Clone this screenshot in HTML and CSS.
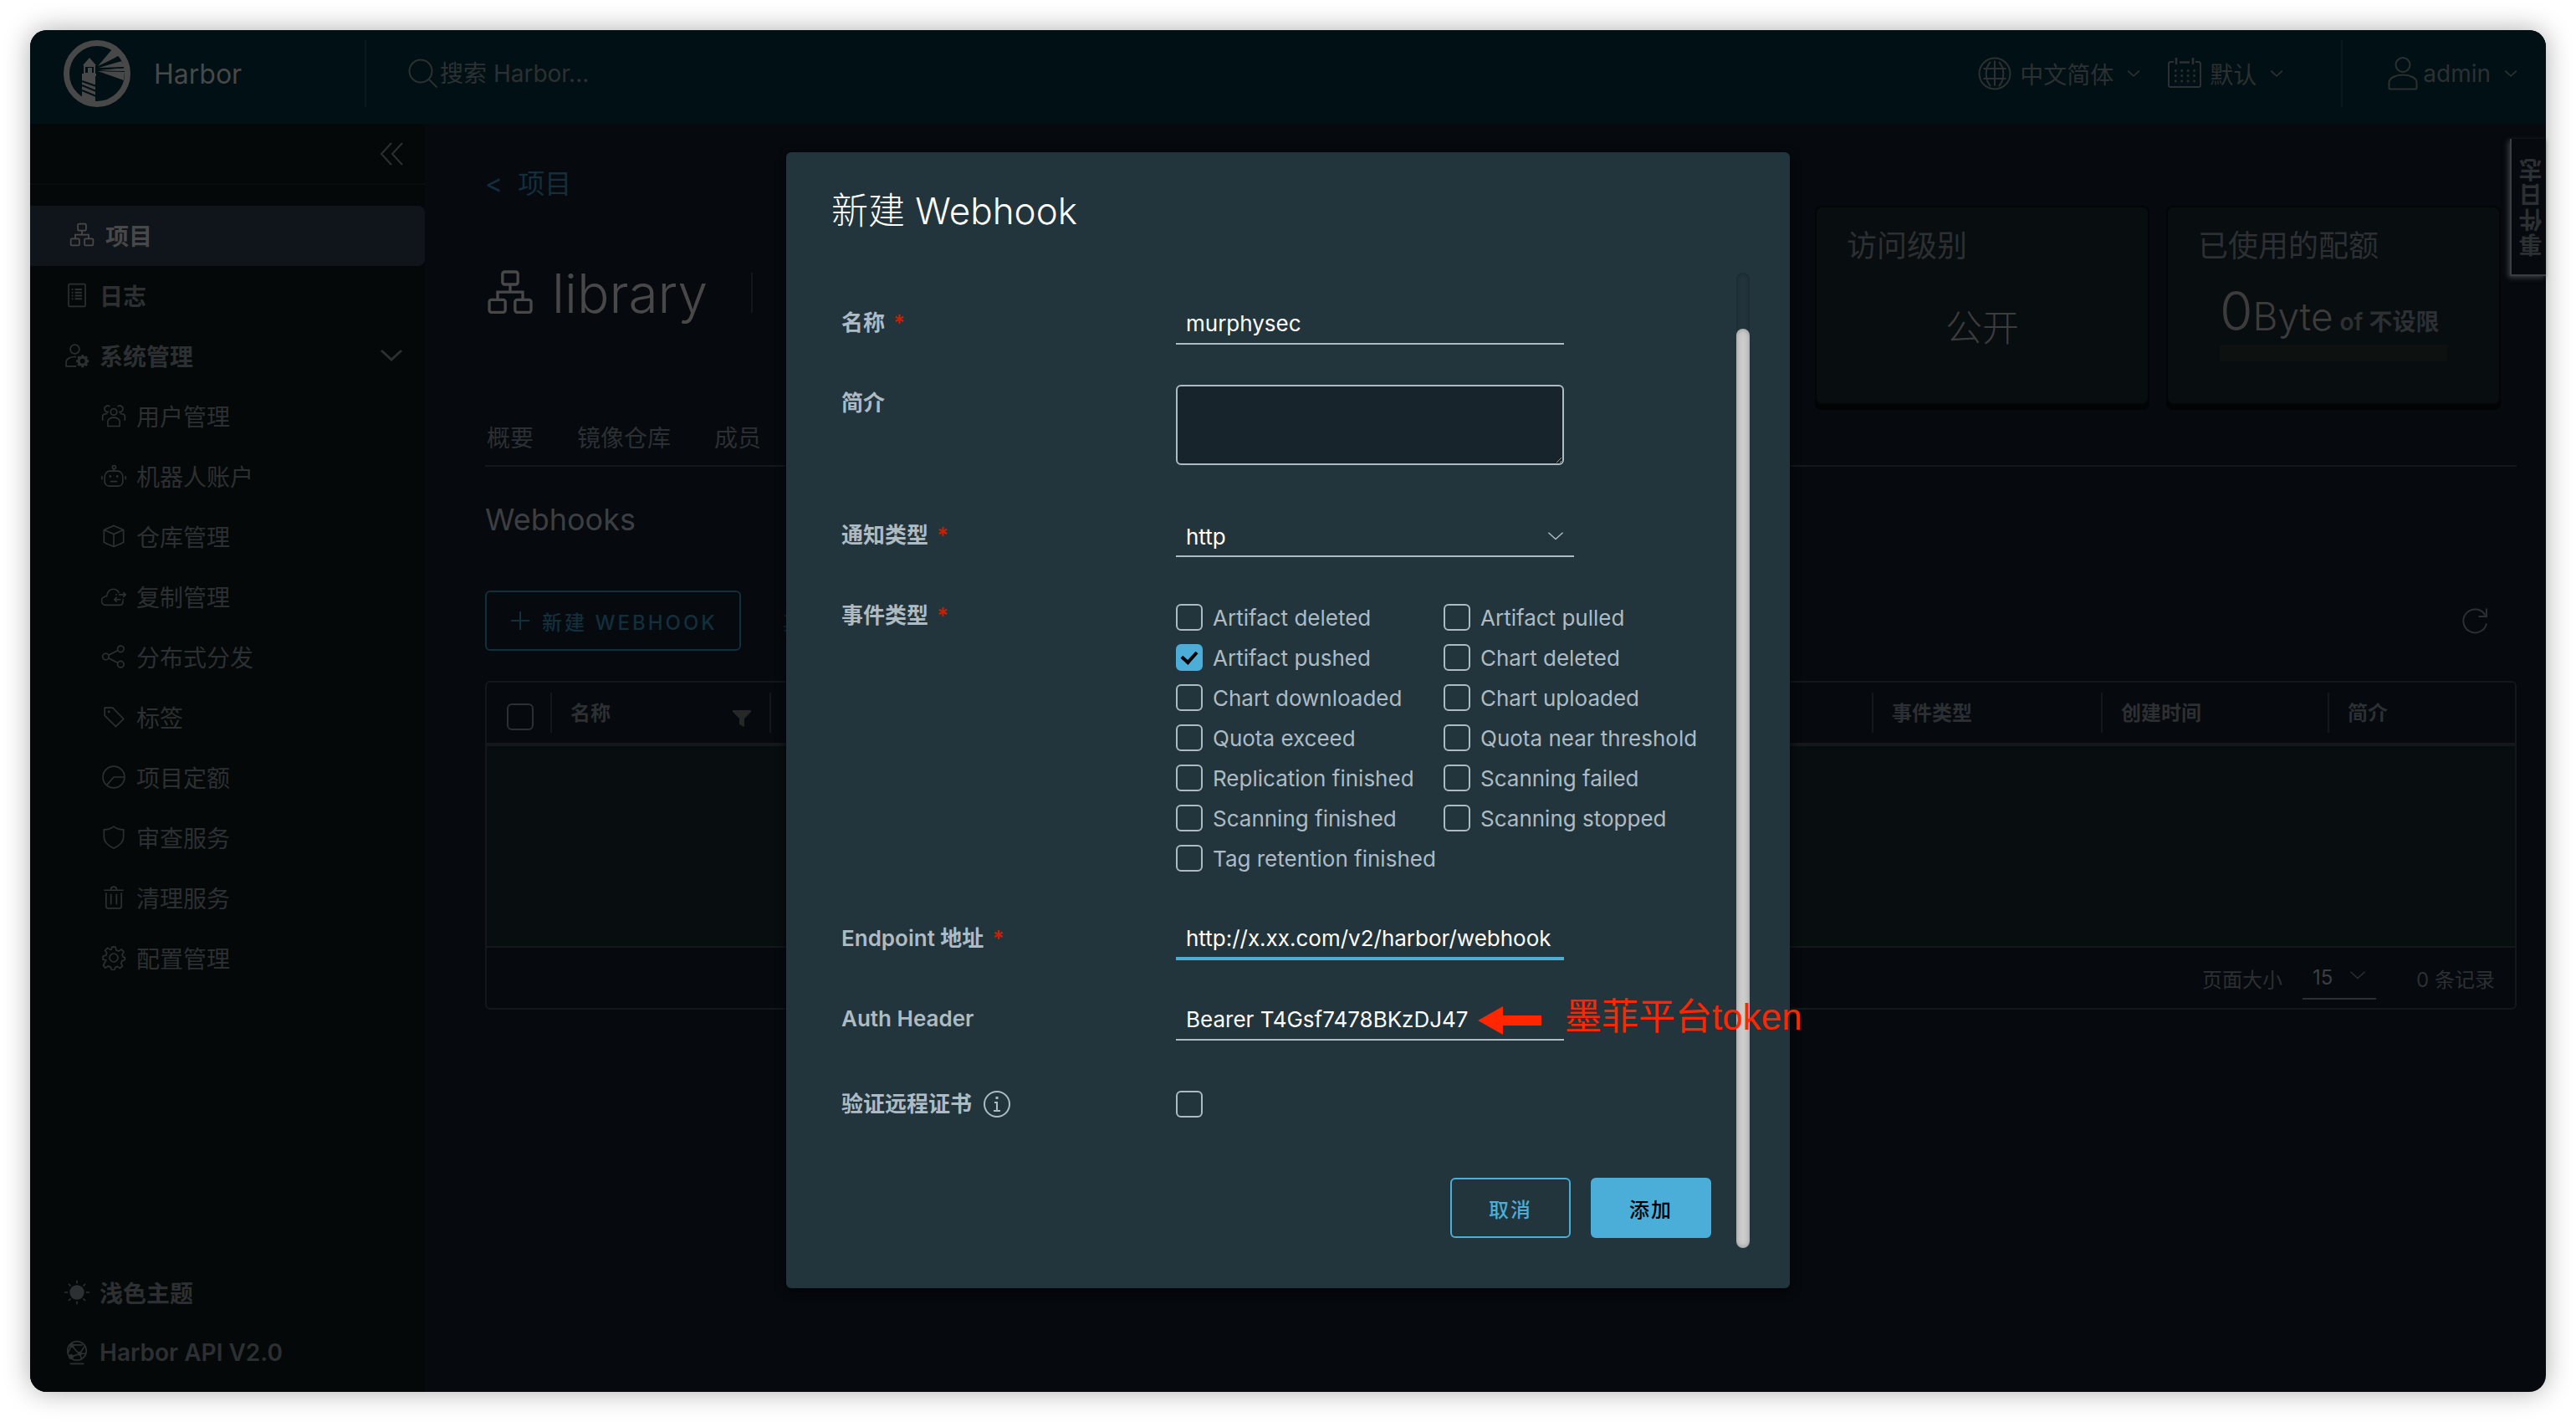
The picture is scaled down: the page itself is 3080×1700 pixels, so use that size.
FILE: index.html
```html
<!DOCTYPE html>
<html lang="zh-CN">
<head>
<meta charset="utf-8">
<title>Harbor</title>
<link rel="stylesheet" href="styles.css">
</head>
<body>
<svg class="sprite" aria-hidden="true">
  <symbol id="i-org" viewBox="0 0 36 36"><rect x="12.500" y="3" width="11" height="9" rx="1.500"/><rect x="3" y="23" width="11.500" height="9" rx="1.500"/><rect x="21.500" y="23" width="11.500" height="9" rx="1.500"/><path d="M18 12v5M9 23v-5.500h18V23"/></symbol>
  <symbol id="i-log" viewBox="0 0 36 36"><rect x="6" y="2" width="24" height="32" rx="1.500"/><path d="M10.500 9.500h2M15 9.500h10M10.500 14h2M15 14h10M10.500 18.500h2M15 18.500h10M10.500 23h2M15 23h10" stroke-width="2.400"/></symbol>
  <symbol id="i-admin" viewBox="0 0 36 36"><circle cx="15" cy="9" r="6.500"/><path d="M17 20C9 19 3 23 2.500 27v6.500H17"/><circle cx="26" cy="26" r="5.500" stroke-width="4"/><path d="M26 17v3M26 32v3M17 26h3M32 26h3M19.600 19.600l2 2M30.400 30.400l2 2M19.600 32.400l2-2M30.400 21.600l2-2" stroke-width="3.600"/></symbol>
  <symbol id="i-users" viewBox="0 0 36 36"><circle cx="18" cy="12.500" r="4.500"/><path d="M9.500 33v-7c0-3 4-5.500 8.500-5.500s8.500 2.500 8.500 5.500v7zM10.500 12.500A4.500 4.500 0 1 1 12.500 5M25.500 12.500A4.500 4.500 0 1 0 23.500 5M2 25v-6c0-2.500 3-4 7-4M34 25v-6c0-2.500-3-4-7-4"/></symbol>
  <symbol id="i-robot" viewBox="0 0 36 36"><path d="M12 11h12c3.500 0 7 4 7 8.500v7c0 3-3 6-6 6H11c-3 0-6-3-6-6v-7C5 15 8.500 11 12 11zM18 11V8M13 26h10M1 18v5M35 18v5"/><circle cx="18.500" cy="5.500" r="2.500"/><path d="M11.500 18.500h3M21.500 18.500h3" stroke-width="3"/></symbol>
  <symbol id="i-box" viewBox="0 0 36 36"><path d="M18 3l14 6v18l-14 6-14-6V9zM4 9l14 6 14-6M18 15v18"/></symbol>
  <symbol id="i-cloud" viewBox="0 0 36 36"><path d="M31 24v2c0 2.500-2 4.500-5 4.500H7c-4 0-6.500-3-6.500-6.500S4 18 8 17.500C8.500 12 12 7.500 17 7.500c4 0 7 2 8.500 5.500M25 15.500h9.500M31.500 12l3.500 3.500-3.500 3.500M19 22.500h9M22.500 19L19 22.500l3.500 3.500M20.500 15.500h2M30.500 22.500h2"/></symbol>
  <symbol id="i-share" viewBox="0 0 36 36"><circle cx="6.500" cy="18" r="4.500"/><circle cx="28" cy="7" r="4.500"/><circle cx="28" cy="29" r="4.500"/><path d="M10.500 16L24 9M10.500 20L24 27"/></symbol>
  <symbol id="i-tag" viewBox="0 0 36 36"><path d="M5 5h11.500L32 21 21 32 5 16z"/><path d="M9.500 10.500h3" stroke-width="3"/></symbol>
  <symbol id="i-pie" viewBox="0 0 36 36"><circle cx="18" cy="18" r="15.500"/><path d="M33 18H18L8.500 29"/></symbol>
  <symbol id="i-shield" viewBox="0 0 36 36"><path d="M18 2.500c4 3 9 4.500 14 4.500v10c0 8-6 13-14 16.500C10 30 4 25 4 17V7c5 0 10-1.500 14-4.500z"/></symbol>
  <symbol id="i-trash" viewBox="0 0 36 36"><path d="M4 7.500h28M7 11v20c0 1.500 1 2.500 2.500 2.500h17c1.500 0 2.500-1 2.500-2.500V11M14 13v15M22 13v15M14 6.500c0-3 1-4 4-4s4 1 4 4"/></symbol>
  <symbol id="i-gear" viewBox="0 0 36 36"><path d="M15.500 2.500h5l1 4.500 3.500 1.500 4-2.500 3.500 3.500-2.500 4 1.500 3.500 2.500.500v3.500l-4 1.500-1.500 3.500 2 4-3.500 3-4-2.500-3 1.500-1 3.500h-4l-1.500-4-3.500-1.500-4 2.500-3-3.500 2-4L7 21.500 2.500 20.500v-4.500L7 14.500 8 11 5.500 7.500 9 4l4 2.500 1.500-.500z"/><circle cx="18" cy="18" r="6"/></symbol>
  <symbol id="i-sun" viewBox="0 0 36 36"><circle cx="18" cy="18" r="10.500" fill="currentColor" stroke="none"/><path d="M18 1v4M18 31v4M0 18h5M31 18h5M6 6l3 3M27 27l3 3M6 30l3-3M27 9l3-3"/></symbol>
  <symbol id="i-api" viewBox="0 0 36 36"><circle cx="18" cy="15.500" r="13.500"/><path d="M8 34h20M9 6l8 9.500 5 4 2.500 7M29 9l-7 10.500-13 5M12 7h14M10 8L5.500 18M22 19.500h8.500"/><circle cx="11" cy="8" r="2" fill="currentColor"/><circle cx="22" cy="19.500" r="2" fill="currentColor"/><circle cx="9.500" cy="24" r="2.500" fill="currentColor"/></symbol>
  <symbol id="i-search" viewBox="0 0 36 36"><circle cx="15" cy="15" r="13.500"/><path d="M25 25l9.500 9.500"/></symbol>
  <symbol id="i-globe" viewBox="0 0 40 40"><circle cx="20" cy="20" r="18.500"/><path d="M20 4.500v30M6.500 14h27M6.500 26h27M15 6C8 13 8 27 15 35M25 6c7 7 7 21 0 29"/></symbol>
  <symbol id="i-calendar" viewBox="0 0 40 40"><path d="M7 6H3.500C2 6 1 7 1 8.500V34c0 1 1 2 2 2h34c1 0 2-1 2-2V8.500C39 7 38 6 36.500 6H33"/><path d="M10 1v8M30 1v8M14 6.500h12" stroke-width="2.600"/><path d="M8 16.500h26M8 22.500h26M8 29h26" stroke-width="2.600" stroke-dasharray="2.600 4.800"/></symbol>
  <symbol id="i-user" viewBox="0 0 36 40"><ellipse cx="18" cy="9.500" rx="8.500" ry="8.500"/><path d="M1.500 37V31c0-6 8-9.500 16.500-9.500S34.500 25 34.500 31v6c0 1-.500 1.500-1.500 1.500H3c-1 0-1.500-.500-1.500-1.500z"/></symbol>
  <symbol id="i-down" viewBox="0 0 28 28"><path d="M2 8l12 11L26 8"/></symbol>
  <symbol id="i-refresh" viewBox="0 0 32 32"><path d="M30 19.500A14 14 0 1 1 28.500 9.500M30 1.500v9.500H20.500"/></symbol>
</svg>

<div class="window">
  <header class="topbar">
    <a class="brand" href="#">
      <svg class="logo" viewBox="0 0 80 80" aria-hidden="true">
        <circle cx="40" cy="40" r="36.500" fill="none" stroke="currentColor" stroke-width="7"/>
        <path d="M31 21l8 9H23zM24 30h14v10H24z" fill="currentColor"/>
        <path d="M26 32h10v7h-2v-6h-5v6h-3z" fill="#001014"/>
        <path d="M22 40h17v3h-1v31H22V43z" fill="currentColor"/>
        <path d="M22 49l17 6M22 54l17 7M22 60l17 7" stroke="#001014" stroke-width="2"/>
        <path d="M41 31L58 11l9 8zM42 33l27-8 5 7zM42 36l31-3v5zM41 37l32 1-1 10z" fill="currentColor"/>
        <path d="M42 32l23-13 4 6zM42 35l30-3v1.500zM42 36.500l31 .500v1z" fill="#001014"/>
      </svg>
      <span>Harbor</span>
    </a>
    <label class="search"><svg class="icon i36"><use href="#i-search"/></svg><input type="text" placeholder="搜索 Harbor..." aria-label="搜索"></label>
    <button class="top-btn lang" type="button"><svg class="icon i40"><use href="#i-globe"/></svg>中文简体<svg class="icon caret"><use href="#i-down"/></svg></button>
    <button class="top-btn date" type="button"><svg class="icon i40"><use href="#i-calendar"/></svg>默认<svg class="icon caret"><use href="#i-down"/></svg></button>
    <button class="top-btn account" type="button"><svg class="icon i40"><use href="#i-user"/></svg>admin<svg class="icon caret"><use href="#i-down"/></svg></button>
  </header>

  <div class="main">
    <nav class="sidebar">
      <button class="collapse" type="button" aria-label="收起"><svg class="icon i28" viewBox="0 0 28 28"><path d="M14 1L2 14l12 13M27 1L15 14l12 13"/></svg></button>
      <div class="menu">
        <a class="item active" href="#"><svg class="icon i32"><use href="#i-org"/></svg>项目</a>
        <a class="item" href="#"><svg class="icon i30"><use href="#i-log"/></svg>日志</a>
        <a class="item" href="#"><svg class="icon i30"><use href="#i-admin"/></svg>系统管理<svg class="icon i28 end"><use href="#i-down"/></svg></a>
        <a class="item sub" href="#"><svg class="icon i30"><use href="#i-users"/></svg>用户管理</a>
        <a class="item sub" href="#"><svg class="icon i30"><use href="#i-robot"/></svg>机器人账户</a>
        <a class="item sub" href="#"><svg class="icon i30"><use href="#i-box"/></svg>仓库管理</a>
        <a class="item sub" href="#"><svg class="icon i30"><use href="#i-cloud"/></svg>复制管理</a>
        <a class="item sub" href="#"><svg class="icon i30"><use href="#i-share"/></svg>分布式分发</a>
        <a class="item sub" href="#"><svg class="icon i30"><use href="#i-tag"/></svg>标签</a>
        <a class="item sub" href="#"><svg class="icon i30"><use href="#i-pie"/></svg>项目定额</a>
        <a class="item sub" href="#"><svg class="icon i30"><use href="#i-shield"/></svg>审查服务</a>
        <a class="item sub" href="#"><svg class="icon i30"><use href="#i-trash"/></svg>清理服务</a>
        <a class="item sub" href="#"><svg class="icon i30"><use href="#i-gear"/></svg>配置管理</a>
      </div>
      <div class="menu-foot">
        <a class="item" href="#"><svg class="icon i30"><use href="#i-sun"/></svg>浅色主题</a>
        <a class="item" href="#"><svg class="icon i30"><use href="#i-api"/></svg>Harbor API V2.0</a>
      </div>
    </nav>

    <main class="content">
      <div class="hero">
        <div class="hero-text">
          <a class="crumb" href="#"><span>&lt;</span><span>项目</span></a>
          <h1 class="project"><svg class="icon i60"><use href="#i-org"/></svg>library</h1>
        </div>
        <section class="card">
          <h2>访问级别</h2>
          <p class="access">公开</p>
        </section>
        <section class="card">
          <h2>已使用的配额</h2>
          <div class="quota"><p><span class="q-num">0</span><span class="q-unit">Byte</span> <strong>of 不设限</strong></p><div class="q-bar"></div></div>
        </section>
      </div>
      <div class="tabs"><a href="#">概要</a><a href="#">镜像仓库</a><a href="#">成员</a></div>
      <h3 class="section-title">Webhooks</h3>
      <div class="actions">
        <button class="new-btn" type="button"><svg class="icon i24" viewBox="0 0 24 24"><path d="M12 1v22M1 12h22"/></svg>新建 WEBHOOK</button>
        <button class="more-btn" type="button">其</button>
        <button class="refresh" type="button" aria-label="刷新"><svg class="icon i32"><use href="#i-refresh"/></svg></button>
      </div>
      <div class="grid">
        <table>
          <colgroup><col class="c-check"><col class="c-name"><col><col class="c-event"><col class="c-time"><col class="c-desc"></colgroup>
          <thead><tr>
            <th><input class="check" type="checkbox" aria-label="全选"></th>
            <th><div class="th">名称<svg class="filter" viewBox="0 0 22 22"><path d="M0 1h22v2l-8 8v10l-6-3v-7L0 3z"/></svg></div></th>
            <th></th>
            <th><div class="th">事件类型</div></th>
            <th><div class="th">创建时间</div></th>
            <th><div class="th">简介</div></th>
          </tr></thead>
          <tbody><tr><td colspan="6"></td></tr></tbody>
        </table>
        <div class="pager">
          <label for="page-size">页面大小</label>
          <div class="pick small"><select id="page-size"><option>15</option></select><svg class="icon"><use href="#i-down"/></svg></div>
          <span>0 条记录</span>
        </div>
      </div>
    </main>
  </div>

  <button class="event-tab" type="button">事件日志</button>

  <div class="backdrop">
    <div class="modal" role="dialog" aria-labelledby="dialog-title">
      <h3 class="modal-title" id="dialog-title">新建 Webhook</h3>
      <div class="modal-body">
        <form class="form">
          <div class="row"><label class="lbl req" for="name">名称</label><input class="text" id="name" type="text" value="murphysec"></div>
          <div class="row tall"><label class="lbl" for="desc">简介</label><textarea id="desc"></textarea></div>
          <div class="row"><label class="lbl req" for="type">通知类型</label><div class="pick"><select id="type"><option>http</option></select><svg class="icon"><use href="#i-down"/></svg></div></div>
          <div class="row events"><span class="lbl req">事件类型</span>
            <div class="checks">
              <label><input class="check" type="checkbox">Artifact deleted</label>
              <label><input class="check" type="checkbox">Artifact pulled</label>
              <label><input class="check" type="checkbox" checked>Artifact pushed</label>
              <label><input class="check" type="checkbox">Chart deleted</label>
              <label><input class="check" type="checkbox">Chart downloaded</label>
              <label><input class="check" type="checkbox">Chart uploaded</label>
              <label><input class="check" type="checkbox">Quota exceed</label>
              <label><input class="check" type="checkbox">Quota near threshold</label>
              <label><input class="check" type="checkbox">Replication finished</label>
              <label><input class="check" type="checkbox">Scanning failed</label>
              <label><input class="check" type="checkbox">Scanning finished</label>
              <label><input class="check" type="checkbox">Scanning stopped</label>
              <label><input class="check" type="checkbox">Tag retention finished</label>
            </div>
          </div>
          <div class="row"><label class="lbl req" for="endpoint">Endpoint 地址</label><input class="text current" id="endpoint" type="text" value="http://x.xx.com/v2/harbor/webhook"></div>
          <div class="row"><label class="lbl" for="auth">Auth Header</label><input class="text" id="auth" type="text" value="Bearer T4Gsf7478BKzDJ47">
            <div class="note"><svg viewBox="0 0 76 34" aria-hidden="true"><path d="M0 17L30 0v11h46v12H30v11z"/></svg><span>墨菲平台token</span></div>
          </div>
          <div class="row verify"><label class="lbl" for="verify">验证远程证书<svg class="icon i32 info" viewBox="0 0 32 32"><circle cx="16" cy="16" r="15"/><path d="M16 7v3" stroke-width="3"/><path d="M13 14h3v10M12 24h8"/></svg></label><input class="check" id="verify" type="checkbox"></div>
          <div class="buttons"><button class="btn" type="button">取消</button><button class="btn primary" type="submit">添加</button></div>
        </form>
        <div class="scrollbar"><div class="thumb"></div></div>
      </div>
    </div>
  </div>
</div>
<script src="script.js"></script>
</body>
</html>
```
FILE: styles.css
```css
* { box-sizing: border-box; }
body {
  margin: 0;
  padding: 36px;
  background: #fff;
  font-family: Inter, "Noto Sans CJK SC", sans-serif;
  font-size: 28px;
  color: #2c3032;
}
h1, h2, h3, p { margin: 0; font-weight: 400; }
a { color: inherit; text-decoration: none; }
button, input, select, textarea { font: inherit; color: inherit; margin: 0; padding: 0; border: 0; background: none; border-radius: 0; }
.sprite { position: absolute; width: 0; height: 0; }
.icon { flex: none; width: 28px; height: 28px; fill: none; stroke: currentColor; stroke-width: 2; }
.i24 { width: 24px; height: 24px; }
.i28 { width: 28px; height: 28px; }
.i30 { width: 30px; height: 30px; }
.i32 { width: 32px; height: 32px; }
.i36 { width: 36px; height: 36px; }
.i40 { width: 40px; height: 40px; }
.i60 { width: 60px; height: 60px; }

.window {
  position: relative;
  display: flex;
  flex-direction: column;
  min-height: calc(100vh - 72px);
  border-radius: 20px;
  background: #06090e;
  box-shadow: 0 0 32px rgba(0, 0, 0, .32);
}

/* Top bar */
.topbar {
  display: flex;
  align-items: center;
  height: 112px;
  padding: 0 34px 8px 40px;
  background: #001014;
  border-radius: 20px 20px 0 0;
}
.brand { display: flex; align-items: center; gap: 28px; width: 362px; height: 80px; border-right: 2px solid #0a171c; font-size: 32px; color: #484848; }
.logo { width: 80px; height: 80px; }
.search { display: flex; align-items: center; flex: 1; gap: 2px; margin-left: 50px; }
.search input { flex: 1; }
.search input::placeholder { color: #2c3032; opacity: 1; }
.top-btn { display: flex; align-items: center; white-space: nowrap; }
.top-btn .i40 { margin-right: 10px; }
.caret { width: 16px; height: 16px; margin-left: 16px; stroke-width: 3; }
.date { margin: 0 69px 0 33px; }
.account { height: 80px; padding-left: 52px; border-left: 2px solid #0a171c; }
.account .i40 { margin-right: 4px; }

.main { display: flex; flex: 1; }

/* Sidebar */
.sidebar { display: flex; flex-direction: column; width: 472px; background: #050808; border-radius: 0 0 0 20px; }
.collapse { display: flex; align-items: center; justify-content: flex-end; height: 73px; padding-right: 26px; border-bottom: 2px solid #0a0d0e; }
.menu { padding-top: 25px; }
.menu-foot { margin-top: auto; padding-bottom: 10px; }
.item { display: flex; align-items: center; gap: 12px; height: 72px; padding: 0 26px 2px 41px; font-weight: 600; }
.item.active { padding-left: 46px; background: #10141b; border-radius: 0 8px 8px 0; color: #484848; }
.item.sub { padding-left: 85px; font-weight: 400; }
.end { margin-left: auto; stroke-width: 3; }

/* Content */
.content { flex: 1; min-width: 0; padding: 0 35px 0 72px; }
.hero { display: flex; gap: 20px; padding-right: 19px; }
.hero-text { flex: 1; padding-top: 48px; }
.crumb { display: flex; gap: 18px; font-size: 32px; line-height: 48px; color: #122f3c; }
.project { display: flex; align-items: center; gap: 20px; width: 320px; height: 48px; margin-top: 82px; border-right: 2px solid #14181d; font-size: 64px; font-weight: 300; color: #484848; }
.card { width: 400px; height: 238px; margin-top: 98px; padding: 20px 36px; background: #080d0f; border: 2px solid #030507; border-radius: 8px; box-shadow: 0 6px 0 #020305; }
.card h2 { font-size: 36px; line-height: 52px; }
.access { margin-top: 40px; font-size: 44px; font-weight: 300; line-height: 64px; text-align: center; color: #3c3c3c; }
.quota { width: 272px; margin: 12px auto 0; white-space: nowrap; }
.quota p { height: 80px; line-height: 80px; color: #3c3c3c; }
.quota strong { font-size: 28px; font-weight: 600; color: #2c3032; }
.q-num { font-size: 64px; font-weight: 300; }
.q-unit { font-size: 46px; font-weight: 300; }
.q-bar { height: 20px; background: #0d1110; }
.tabs { display: flex; gap: 52px; margin-top: 8px; padding-left: 2px; line-height: 64px; border-bottom: 2px solid #14181b; }
.section-title { margin-top: 39px; font-size: 36px; line-height: 48px; color: #3c3f41; }
.actions { display: flex; align-items: center; height: 72px; margin-top: 61px; }
.new-btn { display: flex; align-items: center; gap: 14px; height: 72px; padding: 0 26px 0 28px; border: 2px solid #122f3c; border-radius: 6px; font-size: 24px; font-weight: 500; letter-spacing: 3px; color: #122f3c; }
.more-btn { margin-left: 50px; font-size: 24px; font-weight: 500; color: #122f3c; }
.refresh { height: 32px; margin: 0 34px 0 auto; }
.grid { margin-top: 36px; border: 2px solid #14181b; border-radius: 6px; font-size: 24px; }
table { width: 100%; table-layout: fixed; border-collapse: collapse; }
.c-check { width: 76px; }
.c-name { width: 262px; }
.c-event { width: 274px; }
.c-time { width: 271px; }
.c-desc { width: 224px; }
th { height: 74px; padding: 0; border-bottom: 4px solid #14181b; font-weight: 600; text-align: left; }
th .check { display: block; margin: 10px 0 0 24px; }
.th { display: flex; align-items: center; justify-content: space-between; height: 48px; padding: 0 22px 4px; border-left: 2px solid #14181b; }
th:nth-child(3) { background: linear-gradient(#14181b, #14181b) left center / 2px 48px no-repeat; }
.filter { width: 22px; height: 22px; margin-top: 18px; fill: #252827; }
td { height: 242px; padding: 0; background: #080d0f; border-bottom: 2px solid #14181b; }
.pager { display: flex; align-items: center; justify-content: flex-end; gap: 24px; height: 72px; padding-right: 24px; }
.pager span { margin-left: 24px; }

.event-tab {
  position: absolute;
  top: 130px;
  right: 0;
  width: 43px;
  height: 164px;
  padding-right: 8px;
  background: #06090e;
  border: solid #3a3e40;
  border-width: 2px 2px 0 0;
  box-shadow: 2px -2px 6px #3a3e40;
  font-weight: 600;
  letter-spacing: 2px;
  line-height: 32px;
  writing-mode: vertical-rl;
  transform: rotate(180deg);
}

/* Dialog */
.backdrop { position: absolute; inset: 0; display: flex; align-items: center; justify-content: center; padding-top: 22px; }
.modal { width: 1200px; padding: 44px 48px 48px 54px; background: #22343c; border-radius: 6px; box-shadow: 0 4px 12px #020506; color: #adbbc4; font-size: 26px; }
.modal-title { margin-bottom: 48px; font-size: 44px; font-weight: 300; line-height: 52px; color: #fff; }
.modal-body { display: flex; justify-content: space-between; }
.form { display: flex; flex-direction: column; gap: 48px; width: 1052px; padding: 38px 0 12px 12px; }
.row { position: relative; display: flex; align-items: flex-start; }
.tall { min-height: 110px; }
.events { padding-bottom: 2px; }
.verify { padding-top: 4px; align-items: center; height: 52px; }
.lbl { display: flex; align-items: center; gap: 10px; width: 400px; line-height: 44px; font-weight: 600; }
.req::after { content: "*"; color: #c92100; }
.info { margin-left: 4px; }
.text { width: 464px; height: 48px; padding: 0 12px 2px; border-bottom: 2px solid #adbbc4; color: #fff; outline: 0; }
.text.current { border-bottom: 4px solid #4aaed9; }
textarea { width: 464px; height: 96px; padding: 8px 12px; background: #17242b; border: 2px solid #adbbc4; border-radius: 6px; resize: both; }
.pick { position: relative; width: 476px; }
.pick select { width: 100%; height: 48px; padding: 0 12px; border-bottom: 2px solid #adbbc4; color: #fff; appearance: none; }
.pick .icon { position: absolute; right: 12px; top: 13px; width: 20px; height: 20px; pointer-events: none; }
.pick.small { width: 88px; }
.pick.small select { height: 52px; border-color: #2c3032; color: #3c3f41; }
.checks { display: grid; grid-template-columns: 320px 320px; }
.checks label { display: flex; align-items: center; gap: 12px; height: 48px; white-space: nowrap; }
.check { flex: none; width: 32px; height: 32px; border: 2px solid currentColor; border-radius: 6px; appearance: none; display: grid; place-items: center; }
.check:checked { background: #4aaed9; border-color: #4aaed9; }
.check:checked::after { content: ""; width: 8px; height: 14px; margin-bottom: 4px; border: solid #000; border-width: 0 4px 4px 0; transform: rotate(42deg); }
.note { position: absolute; left: 761px; top: -12px; display: flex; align-items: center; gap: 28px; font: 44px/64px "Liberation Sans", "Noto Sans CJK SC", sans-serif; color: #ff2600; white-space: nowrap; z-index: 1; }
.note svg { width: 76px; height: 34px; fill: #ff2600; margin-top: 8px; }
.buttons { display: flex; justify-content: flex-end; gap: 24px; margin-top: 16px; }
.btn { width: 144px; height: 72px; border: 2px solid #4aaed9; border-radius: 6px; font-size: 24px; font-weight: 500; letter-spacing: 2px; color: #4aaed9; }
.btn.primary { background: #4aaed9; color: #000; }
.scrollbar { width: 16px; padding-top: 67px; border-radius: 8px; box-shadow: inset 0 0 6px rgba(0, 0, 0, .3); }
.thumb { height: 100%; border-radius: 8px; background: #ccc; box-shadow: inset 0 0 6px rgba(0, 0, 0, .3); }
```
FILE: script.js
```js
// Keep the end of a long endpoint address in view.
const endpoint = document.getElementById('endpoint');
endpoint.scrollLeft = endpoint.scrollWidth;
```
